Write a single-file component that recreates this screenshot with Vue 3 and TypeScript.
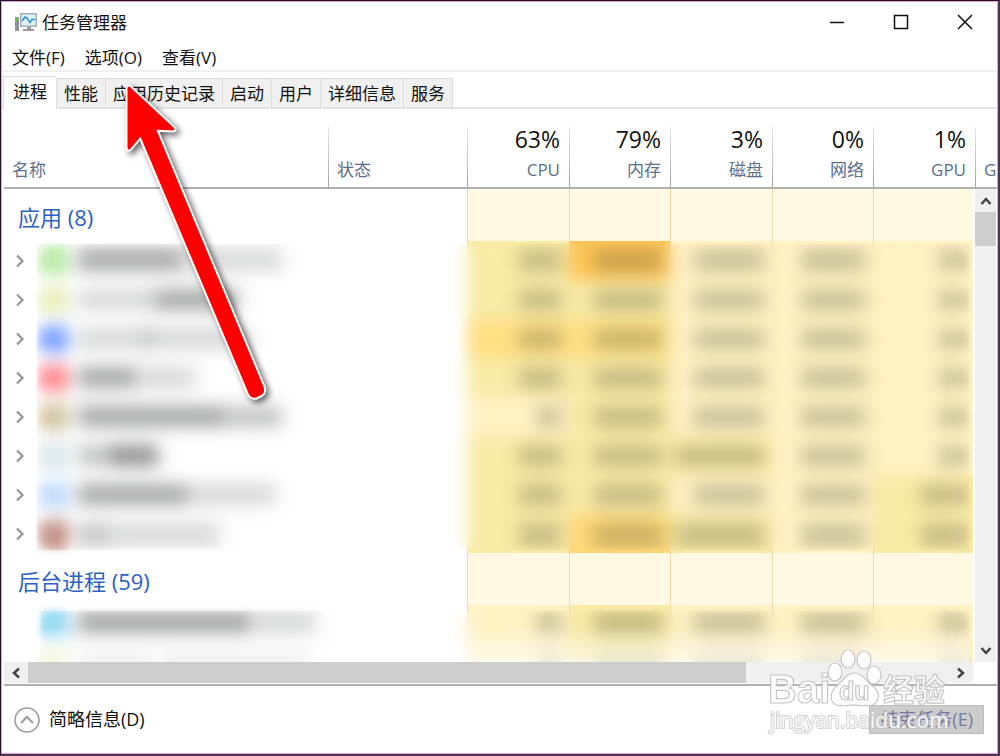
<script setup lang="ts">
interface Process {
  icon: string
  name: [number, number][]
  heat: number[]
}

interface Group {
  title: string
  expandable: boolean
  rows: Process[]
}

const menus: string[] = ['文件(F)', '选项(O)', '查看(V)']
const tabs: string[] = ['进程', '性能', '应用历史记录', '启动', '用户', '详细信息', '服务']

const metrics = [
  { key: 'cpu', value: '63%', label: 'CPU' },
  { key: 'memory', value: '79%', label: '内存' },
  { key: 'disk', value: '3%', label: '磁盘' },
  { key: 'network', value: '0%', label: '网络' },
  { key: 'gpu', value: '1%', label: 'GPU' },
]

// Each name is a run of [width, tone] blocks; heat holds one level per metric.
const groups: Group[] = [
  {
    title: '应用 (8)',
    expandable: true,
    rows: [
      { icon: 'green', name: [[106, 3], [98, 1]], heat: [2, 5, 1, 1, 1] },
      { icon: 'lime', name: [[76, 1], [84, 3]], heat: [2, 2, 1, 1, 1] },
      { icon: 'blue', name: [[60, 1], [20, 2], [92, 1]], heat: [3, 3, 1, 1, 1] },
      { icon: 'red', name: [[60, 3], [58, 1]], heat: [2, 2, 1, 1, 1] },
      { icon: 'olive', name: [[150, 3], [54, 2]], heat: [1, 2, 1, 1, 1] },
      { icon: 'teal', name: [[30, 2], [50, 4]], heat: [2, 2, 2, 1, 1] },
      { icon: 'sky', name: [[112, 3], [86, 1]], heat: [2, 2, 1, 1, 2] },
      { icon: 'brown', name: [[34, 2], [108, 1]], heat: [2, 4, 2, 1, 2] },
    ],
  },
  {
    title: '后台进程 (59)',
    expandable: false,
    rows: [
      { icon: 'cyan', name: [[174, 3], [64, 1]], heat: [1, 2, 1, 1, 1] },
      { icon: 'lime', name: [[76, 1], [8, 0], [146, 1]], heat: [1, 2, 1, 1, 1] },
    ],
  },
]
</script>

<template>
  <div class="frame">
    <div class="window">
      <header class="titlebar">
        <svg class="app-icon" width="24" height="22" viewBox="0 0 24 22" aria-hidden="true">
          <rect x="1" y="6" width="4" height="14" fill="#8d9296" />
          <rect x="2" y="7" width="2" height="3" fill="#5fc43c" />
          <rect x="6" y="2" width="17" height="14" fill="#a9adb0" />
          <rect x="7.500" y="3.500" width="14" height="11" fill="#d8f1fb" />
          <path d="M8 10 L11 6 L13 7 L16 11.500 L18 8.500 L21 8.500" fill="none" stroke="#2d8fc9" stroke-width="1.400" />
          <path d="M13 16 H17 V18 H20 V20 H9 V18 H13 Z" fill="#9a9da0" />
        </svg>
        <h1>任务管理器</h1>
        <div class="controls">
          <button type="button" aria-label="最小化">
            <svg width="16" height="16" viewBox="0 0 16 16"><path d="M1 8.500 H15" stroke="#111" stroke-width="1.500" /></svg>
          </button>
          <button type="button" aria-label="最大化">
            <svg width="16" height="16" viewBox="0 0 16 16"><rect x="1.500" y="1.500" width="13" height="13" fill="none" stroke="#111" stroke-width="1.500" /></svg>
          </button>
          <button type="button" aria-label="关闭">
            <svg width="16" height="16" viewBox="0 0 16 16"><path d="M1 1 L15 15 M15 1 L1 15" stroke="#111" stroke-width="1.500" /></svg>
          </button>
        </div>
      </header>

      <nav class="menu">
        <button v-for="m in menus" :key="m" type="button">{{ m }}</button>
      </nav>

      <div class="tabs" role="tablist">
        <button
          v-for="(t, i) in tabs"
          :key="t"
          type="button"
          role="tab"
          :aria-selected="i === 0"
          :class="{ active: i === 0 }"
        >{{ t }}</button>
      </div>

      <main class="list">
        <table>
          <colgroup>
            <col />
            <col class="c-status" />
            <col v-for="m in metrics" :key="m.key" :class="'c-' + m.key" />
            <col class="c-more" />
          </colgroup>
          <thead>
            <tr>
              <th class="left first" scope="col">名称</th>
              <th class="left" scope="col">状态</th>
              <th v-for="m in metrics" :key="m.key" scope="col">
                <span class="value">{{ m.value }}</span>
                <span>{{ m.label }}</span>
              </th>
              <th class="left" scope="col">G</th>
            </tr>
          </thead>
          <template v-for="g in groups" :key="g.title">
            <tbody>
              <tr class="group">
                <th colspan="2" scope="rowgroup">{{ g.title }}</th>
                <td v-for="m in metrics" :key="m.key" class="metric heat-0"></td>
                <td></td>
              </tr>
            </tbody>
            <tbody class="rows" :class="{ plain: !g.expandable }">
              <tr v-for="(r, i) in g.rows" :key="i">
                <td>
                  <div class="name">
                    <button v-if="g.expandable" type="button" class="expander" aria-label="展开">
                      <svg width="10" height="14" viewBox="0 0 10 14"><path d="M2 1.500 L7.500 7 L2 12.500" fill="none" stroke="#969696" stroke-width="2.200" /></svg>
                    </button>
                    <span v-else class="expander"></span>
                    <i class="icon" :class="r.icon"></i>
                    <i v-for="(s, j) in r.name" :key="j" class="smudge" :class="'tone-' + s[1]" :style="{ width: s[0] + 'px' }"></i>
                  </div>
                </td>
                <td></td>
                <td v-for="(m, j) in metrics" :key="m.key" class="metric" :class="'heat-' + r.heat[j]">
                  <i class="figure" :class="[m.key, { wide: r.heat[j] > 1 }]"></i>
                </td>
                <td></td>
              </tr>
            </tbody>
          </template>
        </table>

        <div class="vscroll">
          <button type="button" aria-label="向上">
            <svg width="12" height="10" viewBox="0 0 12 10"><path d="M1.500 8 L6 3 L10.500 8" fill="none" stroke="#444" stroke-width="2.500" /></svg>
          </button>
          <div class="thumb"></div>
          <button type="button" class="end" aria-label="向下">
            <svg width="12" height="10" viewBox="0 0 12 10"><path d="M1.500 2 L6 7 L10.500 2" fill="none" stroke="#444" stroke-width="2.500" /></svg>
          </button>
        </div>
      </main>

      <div class="hscroll">
        <div class="track">
          <button type="button" aria-label="向左">
            <svg width="10" height="12" viewBox="0 0 10 12"><path d="M8 1.500 L3 6 L8 10.500" fill="none" stroke="#444" stroke-width="2.500" /></svg>
          </button>
          <div class="lane"><div class="thumb"></div></div>
          <button type="button" aria-label="向右">
            <svg width="10" height="12" viewBox="0 0 10 12"><path d="M2 1.500 L7 6 L2 10.500" fill="none" stroke="#444" stroke-width="2.500" /></svg>
          </button>
        </div>
      </div>

      <footer>
        <button type="button" class="details">
          <svg width="26" height="26" viewBox="0 0 26 26" aria-hidden="true">
            <circle cx="13" cy="13" r="12" fill="#fff" stroke="#9c9c9c" stroke-width="1.600" />
            <path d="M7 16 L13 10 L19 16" fill="none" stroke="#9c9c9c" stroke-width="2" />
          </svg>
          <span>简略信息(D)</span>
        </button>
        <button type="button" class="end-task" disabled>结束任务(E)</button>
      </footer>
    </div>

    <svg class="pointer" width="170" height="340" viewBox="0 0 170 340" aria-hidden="true">
      <g stroke-linejoin="round">
        <path d="M21 17 L65 58 L46 57 L154 316 Q156 321 152 323 L148 325 Q144 326 142 322 L33 63 L21 77 Z" fill="#fff" stroke="#fff" stroke-width="7" />
        <path d="M21 17 L65 58 L46 57 L154 316 Q156 321 152 323 L148 325 Q144 326 142 322 L33 63 L21 77 Z" fill="#f00" stroke="#f00" stroke-width="3" />
      </g>
    </svg>

    <svg class="watermark" width="190" height="96" viewBox="0 0 190 96" aria-hidden="true">
      <g fill="#fff" fill-opacity="0.850" stroke="#c6c6c6" stroke-width="1.200">
        <ellipse cx="73" cy="27" rx="7" ry="9" />
        <ellipse cx="86" cy="14" rx="7" ry="9" />
        <ellipse cx="102" cy="15" rx="7" ry="9" />
        <ellipse cx="112" cy="30" rx="7" ry="9" />
        <path d="M92 28 C99 28 103 34 108 39 C115 44 119 49 115 56 C112 62 104 61 92 60 C80 61 73 62 70 56 C67 49 72 43 77 39 C82 34 85 28 92 28 Z" />
        <text class="brand" x="6" y="58">Bai</text>
        <text class="du" x="77" y="55">du</text>
        <text class="cjk" x="121" y="56">经验</text>
      </g>
      <text class="site" x="8" y="83">jingyan.baidu.com</text>
    </svg>
  </div>
</template>

<style>
body {
  margin: 0;
}
</style>

<style scoped>
.frame {
  position: relative;
  box-sizing: border-box;
  height: 100vh;
  border: solid #221326;
  border-width: 1px 2px 2px 1px;
  border-right-color: #4b3450;
  border-bottom-color: #4b3450;
  overflow: hidden;
  font: 17px/24px "Open Sans", "Noto Sans CJK SC", sans-serif;
  color: #111;
}

.window {
  display: flex;
  flex-direction: column;
  box-sizing: border-box;
  height: 100%;
  border: 1px solid #e3a0df;
  background: #fff;
}

button {
  margin: 0;
  padding: 0;
  border: 0;
  background: none;
  font: inherit;
  color: inherit;
}

svg {
  display: block;
}

.titlebar {
  display: flex;
  align-items: center;
  height: 40px;
  padding-left: 12px;
}

h1 {
  flex: 1;
  margin: 0 0 0 4px;
  padding-top: 2px;
  font-size: 17px;
  font-weight: 400;
}

.controls {
  display: flex;
}

.controls button {
  display: grid;
  place-items: center;
  width: 64px;
  height: 40px;
}

.menu {
  display: flex;
  gap: 20px;
  padding: 4px 10px 0;
  border-bottom: 2px solid #f0f0f0;
}

.tabs {
  display: flex;
  align-items: flex-end;
  padding: 4px 0 0 1px;
  border-bottom: 2px solid #e2e2e2;
}

.tabs button {
  height: 29px;
  padding: 2px 7px 0;
  border: solid #dcdcdc;
  border-width: 1px 0 0 1px;
  background: #f0f0f0;
  white-space: nowrap;
}

.tabs button:last-child {
  border-right-width: 1px;
}

.tabs .active {
  height: 33px;
  margin-bottom: -2px;
  padding: 0 9px 3px;
  background: #fff;
}

.list {
  position: relative;
  flex: 1;
  min-height: 0;
  margin-left: 2px;
  overflow: hidden;
}

table {
  width: 100%;
  table-layout: fixed;
  border-collapse: separate;
  border-spacing: 0;
}

.c-status {
  width: 139px;
}

.c-cpu,
.c-disk,
.c-gpu {
  width: 102px;
}

.c-memory,
.c-network {
  width: 101px;
}

.c-more {
  width: 22px;
}

th,
td {
  padding: 0;
  font-weight: 400;
}

thead th {
  box-sizing: border-box;
  height: 80px;
  padding: 0 9px 5px;
  border-bottom: 2px solid #b0b0b0;
  background: linear-gradient(#e8e8e8, #a4a4a4) left bottom / 1px 60px no-repeat;
  color: #5d6f8f;
  text-align: right;
  vertical-align: bottom;
  overflow: hidden;
}

thead .left {
  text-align: left;
}

thead .first {
  padding-left: 8px;
  background: none;
}

thead span {
  display: block;
}

thead .value {
  margin-bottom: 5px;
  font-size: 23px;
  line-height: 28px;
  color: #111;
}

.group th {
  box-sizing: border-box;
  height: 52px;
  padding: 4px 0 0 14px;
  font-size: 22px;
  line-height: 32px;
  text-align: left;
  color: #2a62c4;
}

.metric {
  border-left: 1px solid #efd9a6;
}

.rows {
  position: relative;
}

.rows td {
  height: 39px;
}

.rows::after {
  content: "";
  position: absolute;
  top: 3px;
  right: 28px;
  bottom: 3px;
  left: 33px;
  backdrop-filter: blur(8px);
}

.rows.plain::after {
  top: 6px;
  left: 37px;
  background: linear-gradient(transparent 15px, rgba(255, 255, 255, 0.700) 54px);
}

.name {
  display: flex;
  align-items: center;
}

.expander {
  width: 29px;
  margin-right: 10px;
  padding-left: 11px;
  box-sizing: border-box;
}

.icon,
.smudge,
.figure {
  filter: blur(5px);
}

.icon {
  width: 24px;
  height: 24px;
  margin-right: 11px;
}

.green { background: #a4e38a; }
.lime { background: #e2e9a6; }
.blue { background: #5888ff; }
.red { background: #ff6a72; }
.olive { background: #c6b687; }
.teal { background: #cfe0e5; }
.sky { background: #add0fb; }
.brown { background: #b06e60; }
.cyan { background: #7acff0; }

.smudge {
  height: 19px;
}

.tone-1 { background: #d3d4d4; }
.tone-2 { background: #bbbcbc; }
.tone-3 { background: #9c9d9d; }
.tone-4 { background: #828383; }

.heat-0 { background: #fff8e3; }
.heat-1 { background: #fff2c4; }
.heat-2 { background: #f8eba6; }
.heat-3 { background: #ffe083; }
.heat-4 { background: #ffd878; }
.heat-5 { background: #ffc556; }

.figure {
  display: block;
  height: 18px;
  margin: 0 8px 0 auto;
  background: rgba(82, 82, 58, 0.360);
}

.cpu { width: 24px; }
.cpu.wide { width: 42px; }
.memory { width: 68px; }
.disk { width: 70px; }
.disk.wide { width: 88px; }
.network { width: 64px; }
.gpu { width: 26px; margin-right: 10px; }
.gpu.wide { width: 44px; }

.vscroll {
  position: absolute;
  top: 80px;
  right: 1px;
  bottom: 0;
  display: flex;
  flex-direction: column;
  width: 21px;
  border-left: 2px solid #fff;
  background: #f0f0f0;
}

.vscroll button {
  display: grid;
  place-items: center;
  height: 23px;
}

.vscroll .thumb {
  height: 34px;
  background: #cdcdcd;
}

.vscroll .end {
  margin-top: auto;
}

.hscroll {
  height: 22px;
  padding: 0 24px 0 2px;
}

.track {
  display: flex;
  height: 21px;
  background: #f0f0f0;
}

.track button {
  display: grid;
  place-items: center;
  width: 24px;
}

.lane {
  flex: 1;
}

.lane .thumb {
  width: 78%;
  height: 100%;
  background: #cdcdcd;
}

footer {
  display: flex;
  align-items: center;
  justify-content: space-between;
  height: 67px;
  margin-left: 2px;
  padding: 0 13px 0 10px;
  border-top: 2px solid #b0b0b0;
  font-size: 18px;
}

.details {
  display: flex;
  align-items: center;
  gap: 9px;
}

.details span {
  padding-bottom: 2px;
}

.end-task {
  height: 29px;
  padding: 0 10px 1px;
  border: 1px solid #bcbcbc;
  background: #cccccc;
  color: #7479a0;
}

.pointer {
  position: absolute;
  top: 70px;
  left: 107px;
  filter: drop-shadow(3px 3px 3px rgba(0, 0, 0, 0.600));
}

.watermark {
  position: absolute;
  right: 46px;
  bottom: 13px;
}

.brand {
  font: 700 40px "Liberation Sans", sans-serif;
}

.du {
  font: 700 25px "Liberation Sans", sans-serif;
}

.cjk {
  font: 700 31px "Noto Sans CJK SC", sans-serif;
}

.site {
  font: 21px "Open Sans", sans-serif;
  fill: #fff;
  fill-opacity: 0.850;
  stroke: #c8c8c8;
  stroke-opacity: 0.800;
  stroke-width: 2px;
  paint-order: stroke;
}
</style>
